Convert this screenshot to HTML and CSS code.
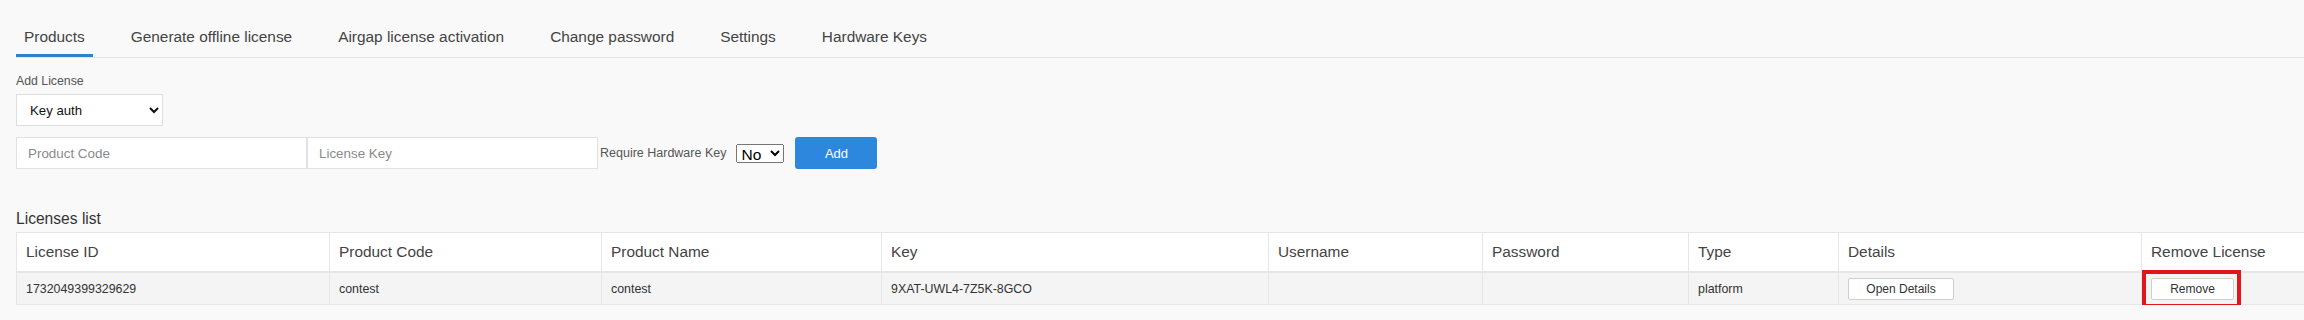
FILE: index.html
```html
<!DOCTYPE html>
<html lang="en">
<head>
    <meta charset="UTF-8">
    <title>Licenses</title>
    <link rel="stylesheet" href="styles.css">
</head>
<body>
<div class="page">
    <ul class="tabs">
        <li class="tab active">Products</li>
        <li class="tab">Generate offline license</li>
        <li class="tab">Airgap license activation</li>
        <li class="tab">Change password</li>
        <li class="tab">Settings</li>
        <li class="tab">Hardware Keys</li>
    </ul>

    <div class="panel">
        <div class="field-label">Add License</div>
        <select class="auth-select">
            <option>Key auth</option>
            <option>User auth</option>
        </select>

        <!-- Add license form -->
        <form class="add-form" onsubmit="return false">
            <input class="text-input" type="text" placeholder="Product Code">
            <input class="text-input" type="text" placeholder="License Key">
            <label class="hw-label">Require Hardware Key</label>
            <select class="hw-select">
                <option>No</option>
                <option>Yes</option>
            </select>
            <button class="add-btn" type="submit">Add</button>
        </form>

        <h3 class="list-title">Licenses list</h3>
        <div class="table-wrap">
            <table class="licenses">
                <colgroup>
                    <col class="c-id">
                    <col class="c-code">
                    <col class="c-name">
                    <col class="c-key">
                    <col class="c-user">
                    <col class="c-pass">
                    <col class="c-type">
                    <col class="c-details">
                    <col class="c-remove">
                </colgroup>
                <thead>
                    <tr>
                        <th>License ID</th>
                        <th>Product Code</th>
                        <th>Product Name</th>
                        <th>Key</th>
                        <th>Username</th>
                        <th>Password</th>
                        <th>Type</th>
                        <th>Details</th>
                        <th>Remove License</th>
                    </tr>
                </thead>
                <tbody>
                    <tr>
                        <td>1732049399329629</td>
                        <td>contest</td>
                        <td>contest</td>
                        <td>9XAT-UWL4-7Z5K-8GCO</td>
                        <td></td>
                        <td></td>
                        <td>platform</td>
                        <td><button class="btn btn-details">Open Details</button></td>
                        <td><span class="mark"><button class="btn btn-remove">Remove</button></span></td>
                    </tr>
                </tbody>
            </table>
        </div>
    </div>
</div>
</body>
</html>
```

FILE: styles.css
```css
body { margin: 0; background: #f9f9f9; font-family: "Liberation Sans", Arial, sans-serif; color: #444; overflow: hidden; }
.page { padding-left: 16px; }

.tabs { display: flex; gap: 30px; list-style: none; margin: 0; padding: 27px 0 0; border-bottom: 1px solid #e4e4e4; }
.tab { padding: 0 8px 7px; font-size: 15.4px; line-height: 20px; color: #444; border-bottom: 3px solid transparent; cursor: pointer; }
.tab.active { border-bottom-color: #2f80cd; }

.panel { padding-top: 15px; }
.field-label { font-size: 12.3px; line-height: 16px; color: #555; }
.auth-select { display: block; margin-top: 5px; width: 147px; height: 32px; border: 1px solid #dedede; border-radius: 0; background: #fff; color: #111; font-family: inherit; font-size: 13.2px; padding: 0 6px 0 9px; }

.add-form { display: flex; align-items: center; margin-top: 11px; }
.text-input { box-sizing: border-box; width: 291px; height: 32px; margin: 0; padding: 0 11px; border: 1px solid #e2e2e2; background: #fff; font-family: inherit; font-size: 13.4px; color: #333; }
.text-input::placeholder { color: #8a8a8a; }
.hw-label { margin-left: 2px; font-size: 12.5px; line-height: 16px; color: #555; }
.hw-select { margin-left: 10px; width: 48px; height: 19px; padding: 0; font-family: inherit; font-size: 15.5px; color: #000; }
.add-btn { margin-left: 11px; width: 82px; height: 32px; border: none; border-radius: 3px; background: #2d87dd; color: #fff; font-family: inherit; font-size: 13px; cursor: pointer; }
.add-btn:hover { background: #2374c2; }

.list-title { margin: 40px 0 3px; font-size: 15.6px; line-height: 20px; font-weight: normal; color: #333; }

.licenses { border-collapse: collapse; table-layout: fixed; width: 2305px; }
.c-id { width: 313px; }
.c-code { width: 272px; }
.c-name { width: 280px; }
.c-key { width: 387px; }
.c-user { width: 214px; }
.c-pass { width: 206px; }
.c-type { width: 150px; }
.c-details { width: 303px; }
.c-remove { width: 180px; }

.licenses th { height: 38px; padding: 0 9px; text-align: left; font-weight: normal; font-size: 15.4px; color: #444; background: #fff; border: 1px solid #e6e6e6; border-bottom-width: 2px; }
.licenses td { height: 31px; padding: 0 9px; font-size: 12.4px; color: #333; background: #f4f4f4; border: 1px solid #e6e6e6; }

.btn { height: 22px; padding: 0; border: 1px solid #cfcfcf; border-radius: 2px; background: #fff; color: #333; font-family: inherit; font-size: 12px; vertical-align: middle; cursor: pointer; }
.btn-details { width: 106px; }
.btn-remove { width: 83px; }

.mark { position: relative; display: inline-block; vertical-align: middle; }
.mark::after { content: ""; position: absolute; top: -8px; bottom: -8px; left: -9px; right: -7px; border: 4px solid #e1161d; pointer-events: none; }
```
